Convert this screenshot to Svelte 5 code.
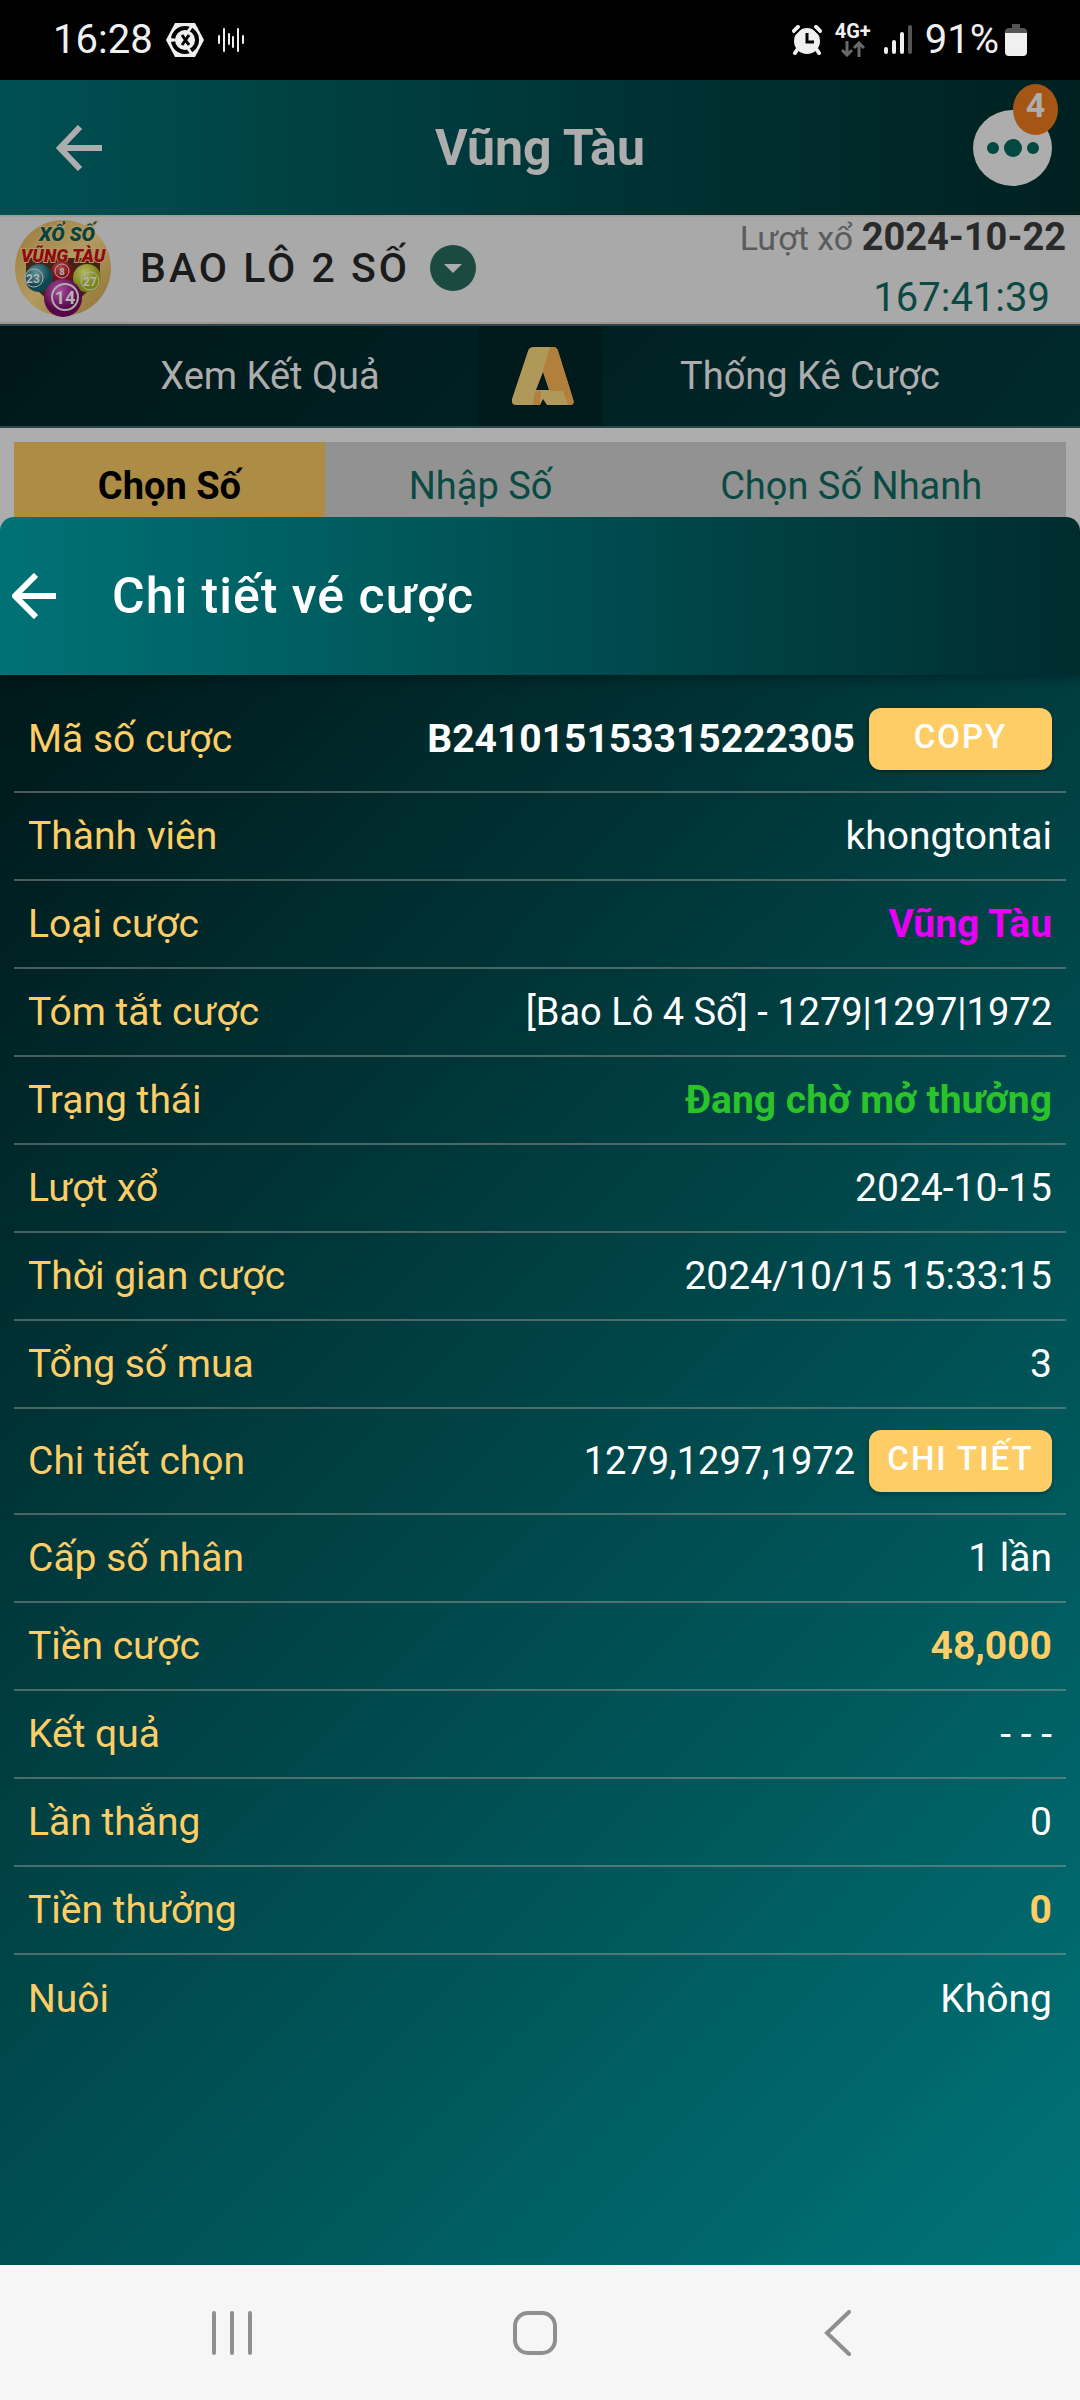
<script>
  let copied = $state(false)
  let activeTab = $state('Chọn Số')

  const tabs = ['Chọn Số', 'Nhập Số', 'Chọn Số Nhanh']

  const rows = [
    { label: 'Mã số cược', value: 'B241015153315222305', kind: 'strong', action: 'COPY' },
    { label: 'Thành viên', value: 'khongtontai' },
    { label: 'Loại cược', value: 'Vũng Tàu', kind: 'game' },
    { label: 'Tóm tắt cược', value: '[Bao Lô 4 Số] - 1279|1297|1972', kind: 'numbers' },
    { label: 'Trạng thái', value: 'Đang chờ mở thưởng', kind: 'pending' },
    { label: 'Lượt xổ', value: '2024-10-15' },
    { label: 'Thời gian cược', value: '2024/10/15 15:33:15' },
    { label: 'Tổng số mua', value: '3' },
    { label: 'Chi tiết chọn', value: '1279,1297,1972', kind: 'numbers', action: 'CHI TIẾT' },
    { label: 'Cấp số nhân', value: '1 lần' },
    { label: 'Tiền cược', value: '48,000', kind: 'money' },
    { label: 'Kết quả', value: '- - -' },
    { label: 'Lần thắng', value: '0' },
    { label: 'Tiền thưởng', value: '0', kind: 'money' },
    { label: 'Nuôi', value: 'Không' }
  ]

  function runAction(row) {
    if (row.action === 'COPY') {
      navigator.clipboard?.writeText(row.value)
      copied = true
    }
  }
</script>

<div class="screen">
  <div class="status-bar">
    <div class="status-group">
      <span>16:28</span>
      <svg viewBox="0 0 38 34" width="38" height="34">
        <path d="M9 0h20l9 17-9 17H9L0 17z" fill="#f0f0f0" />
        <circle cx="19" cy="17" r="12" fill="none" stroke="#000" stroke-width="4" />
        <path d="M3 15l10 1v2L3 19zM29 1l-7 10-3-1 6-8zM29 33l-7-10-3 1 6 8z" fill="#f0f0f0" />
        <path d="M16 12l7 10M23 12l-7 10" stroke="#000" stroke-width="3" />
      </svg>
      <svg viewBox="0 0 28 26" width="28" height="26" stroke="#f0f0f0" stroke-width="2" stroke-linecap="round">
        <path d="M2 9v7M7 2v22M12 7v10M16 10v10M21 2v22M26 9v7" />
      </svg>
    </div>
    <div class="status-group">
      <svg viewBox="0 0 30 30" width="30" height="30">
        <circle cx="15" cy="16" r="13" fill="#f0f0f0" />
        <path d="M2 6l4-4M28 6l-4-4M5 25l-2 3M25 25l2 3" stroke="#f0f0f0" stroke-width="4" stroke-linecap="round" />
        <path d="M2 10l8-8M28 10l-8-8" stroke="#000" stroke-width="2" />
        <path d="M15 8v9h7" fill="none" stroke="#000" stroke-width="3" />
      </svg>
      <div class="network">
        <span>4G+</span>
        <svg viewBox="0 0 24 16" width="24" height="16" fill="none" stroke="#6a6a6a" stroke-width="3">
          <path d="M6 0v14M1 9l5 5 5-5M18 16V2M13 7l5-5 5 5" />
        </svg>
      </div>
      <svg viewBox="0 0 28 30" width="28" height="30" stroke-width="4" stroke-linecap="round">
        <path d="M2 24v3M10 17v10M18 9v18" stroke="#f0f0f0" />
        <path d="M26 2v25" stroke="#555" />
      </svg>
      <div class="battery">
        <span>91%</span>
        <svg viewBox="0 0 22 32" width="22" height="32">
          <path d="M7 0h8v4h3a4 4 0 0 1 4 4v2H0V8a4 4 0 0 1 4-4h3z" fill="#555" />
          <path d="M0 9h22v19a4 4 0 0 1-4 4H4a4 4 0 0 1-4-4z" fill="#f0f0f0" />
        </svg>
      </div>
    </div>
  </div>

  <header class="app-header">
    <button class="back" aria-label="Quay lại">
      <svg viewBox="0 0 46 46" width="46" height="46" fill="none" stroke="#adadad" stroke-width="6">
        <path d="M46 23H5M24 2L4 23l20 21" />
      </svg>
    </button>
    <h1>Vũng Tàu</h1>
    <button class="more-btn" aria-label="Thêm">
      <svg viewBox="0 0 52 18" width="52" height="18" fill="#03493f">
        <circle cx="6" cy="9" r="6" />
        <circle cx="26" cy="9" r="9" />
        <circle cx="46" cy="9" r="6" />
      </svg>
      <span class="badge">4</span>
    </button>
  </header>

  <section class="game-bar">
    <svg viewBox="0 0 98 100" width="98" height="100">
      <defs>
        <linearGradient id="ring" x1="0" y1="0" x2="1" y2="1">
          <stop offset="0" stop-color="#9a7a38" />
          <stop offset=".5" stop-color="#b39a62" />
          <stop offset="1" stop-color="#8d7030" />
        </linearGradient>
        <radialGradient id="blue" cx=".4" cy=".3"><stop offset="0" stop-color="#5f9299" /><stop offset="1" stop-color="#0d4550" /></radialGradient>
        <radialGradient id="red" cx=".4" cy=".3"><stop offset="0" stop-color="#b0484a" /><stop offset="1" stop-color="#7b0c12" /></radialGradient>
        <radialGradient id="lime" cx=".4" cy=".3"><stop offset="0" stop-color="#b5b866" /><stop offset="1" stop-color="#7b8412" /></radialGradient>
        <radialGradient id="pink" cx=".4" cy=".3"><stop offset="0" stop-color="#ad4da0" /><stop offset="1" stop-color="#570848" /></radialGradient>
      </defs>
      <circle cx="49" cy="50" r="48" fill="url(#ring)" />
      <path d="M12 40h74v22L62 84H36L12 62z" fill="#43221a" />
      <g class="logo-text" text-anchor="middle">
        <text x="53" y="23" font-size="20" fill="#08423f" stroke="#b39a62">XỔ SỐ</text>
        <text class="city" x="49" y="44" font-size="18" fill="#8f0a10" stroke="#b39a62">VŨNG TÀU</text>
      </g>
      <circle cx="48" cy="54" r="11" fill="url(#red)" />
      <circle cx="48" cy="53" r="7" fill="none" stroke="#adadad" />
      <circle cx="25" cy="60" r="14" fill="url(#blue)" />
      <circle cx="20" cy="60" r="9" fill="none" stroke="#adadad" />
      <circle cx="73" cy="60" r="14" fill="url(#lime)" />
      <circle cx="76" cy="63" r="9" fill="none" stroke="#adadad" />
      <circle cx="49" cy="80" r="19" fill="url(#pink)" />
      <circle cx="51" cy="79" r="13" fill="none" stroke="#adadad" stroke-width="2" />
      <g class="ball-text" fill="#b4b4b4" text-anchor="middle">
        <text x="19" y="65" font-size="12">23</text>
        <text x="48" y="57" font-size="9">8</text>
        <text x="76" y="68" font-size="12">27</text>
        <text x="51" y="86" font-size="18">14</text>
      </g>
    </svg>
    <button class="game-select">
      <span>BAO LÔ 2 SỐ</span>
      <svg viewBox="0 0 46 46" width="46" height="46">
        <circle cx="23" cy="23" r="23" fill="#1b4a40" />
        <path d="M14 19h18l-9 9z" fill="#adadad" />
      </svg>
    </button>
    <div class="draw">
      <div class="draw-date">Lượt xổ <strong>2024-10-22</strong></div>
      <div class="countdown">167:41:39</div>
    </div>
  </section>

  <nav class="menu">
    <a href="#result">Xem Kết Quả</a>
    <a href="#stats">Thống Kê Cược</a>
    <div class="menu-logo">
      <svg viewBox="0 0 62 58" width="62" height="58">
        <path d="M22 0h19q4 0 5 4l15 48q2 6-3 6H35l-4-6-3 6H4q-5 0-4-6L16 4q1-4 6-4z" fill="#b0975a" />
        <path d="M38 0h3q4 0 5 4l15 48q2 6-3 6h-2l-5-14H38l-7-20z" fill="#b27f3d" />
        <path d="M23 44h6l-1 14h-7z" fill="#b27f3d" />
        <path d="M31 25l6 18H24z" fill="#001a1b" />
      </svg>
    </div>
  </nav>

  <div class="tabs">
    {#each tabs as tab}
      <button class:active={tab === activeTab} onclick={() => (activeTab = tab)}>{tab}</button>
    {/each}
  </div>

  <main class="sheet">
    <header class="sheet-header">
      <button aria-label="Đóng">
        <svg viewBox="0 0 46 46" width="46" height="46" fill="none" stroke="#fff" stroke-width="6">
          <path d="M44 23H4M24 2L3 23l21 21" />
        </svg>
      </button>
      <h2>Chi tiết vé cược</h2>
    </header>

    <dl class="details">
      {#each rows as row}
        <div class="row" class:has-action={row.action}>
          <dt>{row.label}</dt>
          <dd>
            <span class={row.kind}>{row.value}</span>
            {#if row.action}
              <button class="action" onclick={() => runAction(row)}>{row.action}</button>
            {/if}
          </dd>
        </div>
      {/each}
    </dl>
  </main>

  <div class="system-nav">
    <button aria-label="Gần đây">
      <svg viewBox="0 0 44 46" width="44" height="46" stroke="#8f8f8f" stroke-width="4" stroke-linecap="round">
        <path d="M4 3v40M22 3v40M40 3v40" />
      </svg>
    </button>
    <button aria-label="Trang chủ">
      <svg viewBox="0 0 46 46" width="46" height="46" fill="none" stroke="#8f8f8f" stroke-width="4">
        <rect x="3" y="3" width="40" height="40" rx="13" />
      </svg>
    </button>
    <button aria-label="Trở về">
      <svg viewBox="0 0 28 46" width="28" height="46" fill="none" stroke="#8f8f8f" stroke-width="4" stroke-linecap="round">
        <path d="M25 2L3 23l22 21" />
      </svg>
    </button>
  </div>
</div>

<style>
  :global(body) {
    margin: 0;
    background: #adadad;
  }

  .screen {
    min-height: 100vh;
    display: flex;
    flex-direction: column;
    font-family: Roboto, 'Noto Sans', sans-serif;
    font-size: 38px;
    line-height: 48px;
    color: #fff;
  }

  svg {
    display: block;
    flex: none;
  }

  button {
    padding: 0;
    border: none;
    background: none;
    font: inherit;
    color: inherit;
    cursor: pointer;
  }

  .status-bar {
    display: flex;
    justify-content: space-between;
    align-items: center;
    height: 80px;
    padding: 0 53px;
    background: #000;
    font-size: 40px;
    color: #f0f0f0;
  }

  .status-group {
    display: flex;
    align-items: center;
    gap: 13px;
  }

  .battery {
    display: flex;
    align-items: center;
    gap: 6px;
  }

  .network {
    display: flex;
    flex-direction: column;
    align-items: center;
    gap: 2px;
    font-size: 20px;
    font-weight: 700;
    line-height: 16px;
  }

  .app-header {
    display: flex;
    justify-content: space-between;
    align-items: center;
    height: 135px;
    padding: 0 28px 0 56px;
    background: linear-gradient(90deg, #005052, #003638 50%, #002020);
    color: #adadad;
  }

  .back {
    padding-right: 5px;
  }

  h1 {
    margin: 0;
    font-size: 50px;
    font-weight: 700;
  }

  .more-btn {
    position: relative;
    display: flex;
    justify-content: center;
    align-items: center;
    width: 79px;
    height: 76px;
    border-radius: 50%;
    background: #adadad;
  }

  .badge {
    position: absolute;
    top: -26px;
    right: -6px;
    width: 45px;
    height: 51px;
    border-radius: 50%;
    background: #a55614;
    font-size: 34px;
    font-weight: 700;
    line-height: 42px;
  }

  .game-bar {
    display: flex;
    align-items: center;
    height: 101px;
    padding: 0 14px 4px;
    border-top: 2px solid #a39b94;
    border-bottom: 2px solid #a3958c;
    background: #a9a9a9;
  }

  .logo-text {
    font-weight: 900;
    font-style: italic;
    paint-order: stroke;
    stroke-width: 2;
  }

  .ball-text {
    font-weight: 700;
  }

  .game-select {
    display: flex;
    align-items: center;
    gap: 20px;
    margin-left: 28px;
    font-size: 41px;
    font-weight: 500;
    letter-spacing: 3px;
    color: #1b1b1b;
  }

  .draw {
    display: flex;
    flex-direction: column;
    gap: 12px;
    margin-left: auto;
    text-align: right;
  }

  .draw-date {
    font-size: 34px;
    color: #5b5b5b;
  }

  .draw-date strong {
    font-size: 38px;
    color: #2a2a2a;
  }

  .countdown {
    padding-right: 16px;
    font-size: 40px;
    color: #0a4a42;
  }

  .menu {
    position: relative;
    display: grid;
    grid-template-columns: 1fr 1fr;
    align-items: center;
    height: 100px;
    border-top: 2px solid #2b4647;
    border-bottom: 2px solid #2b4647;
    background: linear-gradient(135deg, #001718, #002a2c);
    text-align: center;
  }

  .menu a {
    color: #adadad;
    text-decoration: none;
  }

  .menu-logo {
    position: absolute;
    top: 0;
    bottom: 0;
    left: 50%;
    box-sizing: border-box;
    display: flex;
    justify-content: center;
    align-items: center;
    width: 124px;
    padding-left: 6px;
    transform: translateX(-50%);
    background: #001a1b;
  }

  .tabs {
    display: flex;
    height: 88px;
    padding: 14px 14px 0;
    background: #adadad;
  }

  .tabs button {
    flex: 1 1 auto;
    background: #929292;
    color: #0a4a42;
  }

  .tabs .active {
    background: #ad8d45;
    color: #000;
    font-weight: 700;
  }

  .sheet {
    position: relative;
    flex: 1;
    display: flex;
    flex-direction: column;
    margin-top: -13px;
    border-radius: 14px 14px 0 0;
    overflow: hidden;
  }

  .sheet-header {
    position: relative;
    display: flex;
    align-items: center;
    gap: 54px;
    height: 158px;
    padding: 0 12px;
    background: linear-gradient(90deg, #007276, #002c2e);
    box-shadow: 0 2px 12px rgba(0, 0, 0, 0.4);
  }

  h2 {
    margin: 0;
    font-size: 50px;
    font-weight: 500;
    letter-spacing: 1px;
  }

  .details {
    flex: 1;
    margin: 0;
    padding: 12px 14px 0;
    background: linear-gradient(135deg, #001819, #007479);
    font-size: 39px;
  }

  .row {
    box-sizing: border-box;
    display: flex;
    justify-content: space-between;
    align-items: center;
    height: 88px;
    padding: 0 14px;
    border-bottom: 2px solid rgba(170, 160, 160, 0.45);
  }

  .row:last-child {
    border-bottom: none;
  }

  .has-action {
    height: 106px;
  }

  dt {
    color: #fecd66;
  }

  dd {
    display: flex;
    align-items: center;
    gap: 14px;
    margin: 0;
  }

  .numbers {
    font-size: 38px;
  }

  .strong,
  .game,
  .pending,
  .money {
    font-weight: 700;
  }

  .game {
    color: #e800f5;
  }

  .pending {
    color: #2ac32a;
  }

  .money {
    color: #fecd66;
  }

  .action {
    width: 183px;
    height: 62px;
    padding-bottom: 4px;
    border-radius: 12px;
    background: #fecd66;
    box-shadow: 0 2px 4px rgba(0, 0, 0, 0.3);
    font-size: 33px;
    font-weight: 500;
    letter-spacing: 2px;
  }

  .system-nav {
    display: grid;
    grid-template-columns: repeat(3, 1fr);
    justify-items: center;
    align-items: center;
    height: 135px;
    padding: 0 91px 0 80px;
    background: #f6f6f6;
  }
</style>
